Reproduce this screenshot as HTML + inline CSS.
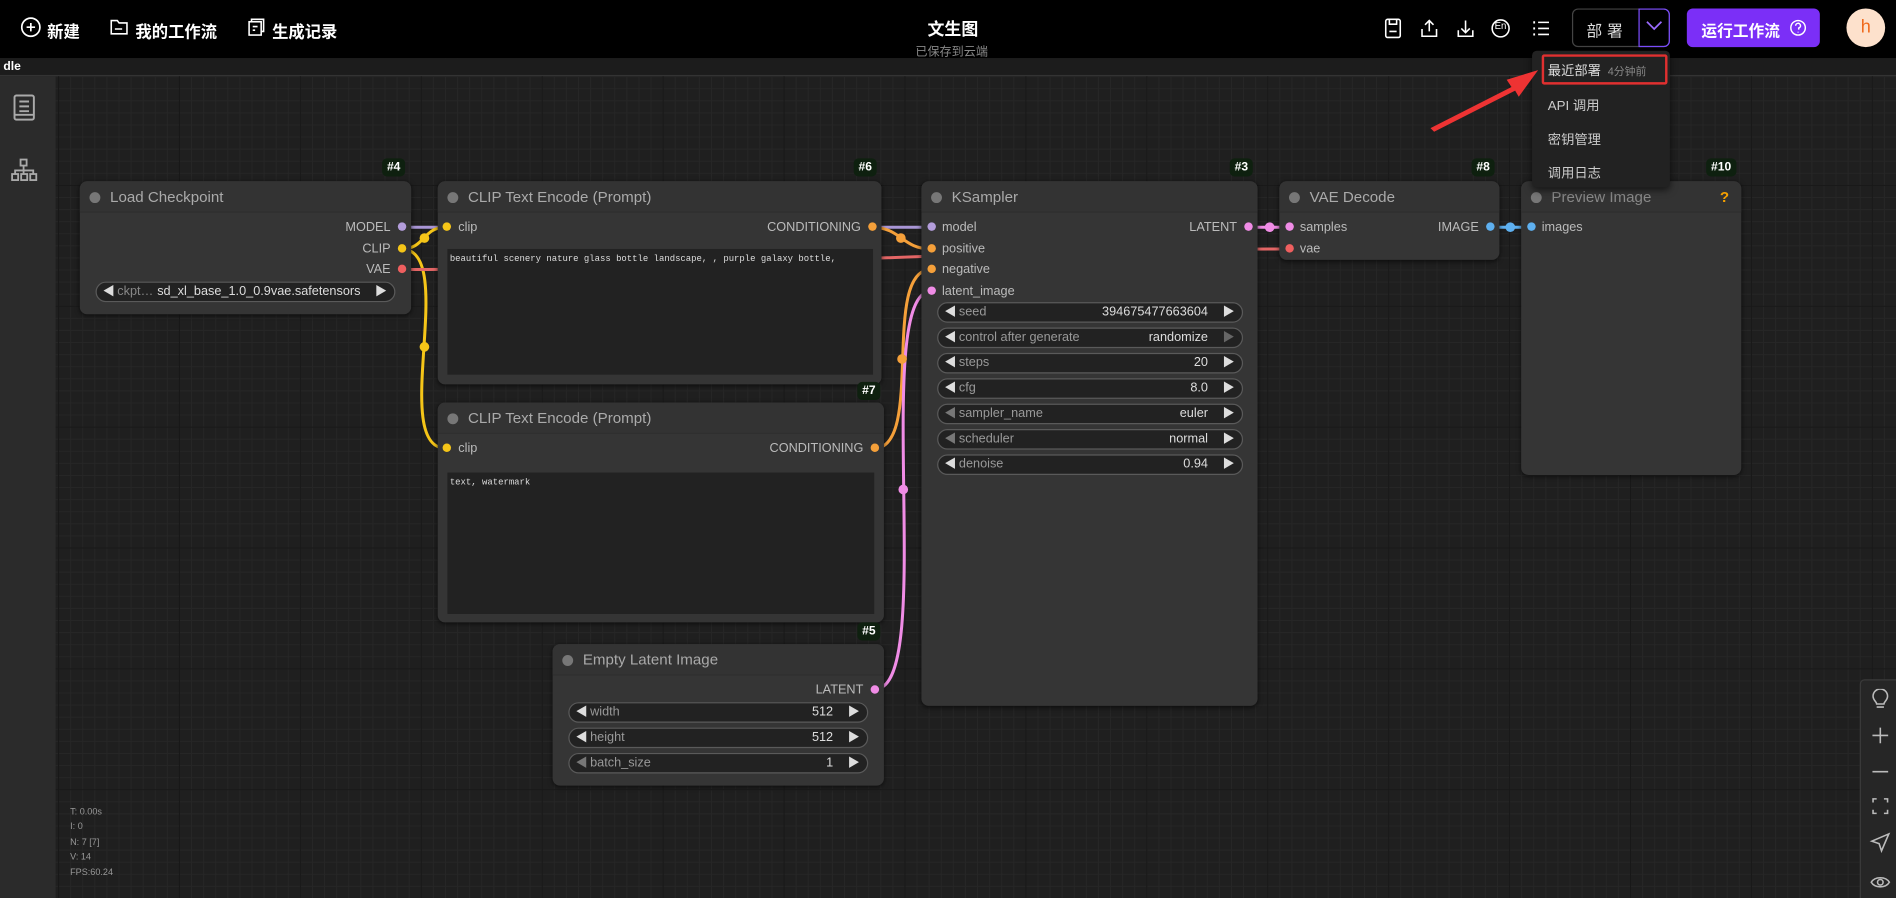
<!DOCTYPE html>
<html><head><meta charset="utf-8"><style>
*{box-sizing:border-box;margin:0;padding:0}
html,body{width:1896px;height:898px;overflow:hidden;background:#000}
#w{position:absolute;left:0;top:0;width:1568px;height:743px;transform:scale(1.2092,1.2086);transform-origin:0 0;font-family:"Liberation Sans","Noto Sans CJK SC",sans-serif;overflow:hidden}
.top{position:absolute;left:0;top:0;width:1568px;height:48px;background:#000;color:#fff}
.canvas{position:absolute;left:0;top:48px;width:1568px;height:695px;background-color:#1f1f1f;
background-image:linear-gradient(#181818 1px,transparent 1px),linear-gradient(90deg,#181818 1px,transparent 1px),linear-gradient(#262626 1px,transparent 1px),linear-gradient(90deg,#262626 1px,transparent 1px);
background-size:100px 100px,100px 100px,10px 10px,10px 10px;background-position:48px 5px,48px 5px,48px 5px,48px 5px}
.strip{position:absolute;left:0;top:48px;width:1568px;height:15px;background:#1c1c1c;border-bottom:1px solid #333;color:#fff;font-size:10px;font-weight:bold;line-height:15px}
.side{position:absolute;left:0;top:63px;width:46px;height:680px;background:#2b2b2b}
.node{position:absolute;background:#353535;border-radius:6px;box-shadow:0 1px 4px rgba(0,0,0,.6)}
.tt{height:26px;border-bottom:1px solid #2e2e2e;color:#aaa;font-size:12.5px;line-height:26px;padding-left:25px;position:relative;background:#333;border-radius:6px 6px 0 0}
.tt:before{content:"";position:absolute;left:8px;top:9px;width:9px;height:9px;border-radius:50%;background:#777}
.badge{position:absolute;background:#0e200f;color:#fff;font-size:10px;font-weight:bold;padding:2px 4px;border-radius:4px}
.sl{position:absolute;font-size:10.5px;color:#bbb;line-height:12px}
.dot{position:absolute;width:7px;height:7px;border-radius:50%}
.wd{position:absolute;height:17px;border:1px solid #5a5a5a;border-radius:9px;background:#222;font-size:10.5px;color:#999;line-height:15px}
.wd .l{position:absolute;left:5px;color:#ddd;font-size:10px}
.wd .n{position:absolute;left:17px}
.wd .v{position:absolute;right:28px;color:#ddd}
.wd .r{position:absolute;right:6px;color:#ddd;font-size:10px}
.ta{position:absolute;background:#222;color:#ddd;font-family:"Liberation Mono",monospace;font-size:7.4px;padding:5px 2px}
.menu{position:absolute;left:1267px;top:42px;width:114px;height:113px;background:#222;border-radius:4px;box-shadow:0 2px 6px rgba(0,0,0,.6);color:#ccc;font-size:11px}
.menu div{position:absolute;left:13px}
</style></head><body><div id="w">
<div class="canvas"></div>
<div class="strip">&nbsp;dle</div>
<div class="side">
<svg style="position:absolute;left:11px;top:15px" width="18" height="22" viewBox="0 0 18 22" fill="none" stroke="#aaa" stroke-width="1.6"><rect x="1" y="1" width="16" height="20" rx="1.5"/><path d="M5 6h8M5 10h8M5 14h8M1 17h16"/></svg>
<svg style="position:absolute;left:9px;top:68px" width="22" height="20" viewBox="0 0 22 20" fill="none" stroke="#aaa" stroke-width="1.5"><rect x="8" y="1" width="5" height="5"/><rect x="1" y="13" width="5" height="5"/><rect x="8.5" y="13" width="5" height="5"/><rect x="16" y="13" width="5" height="5"/><path d="M10.5 6v7M3.5 13v-3h15v3"/></svg>
</div>
<div class="top">
<svg style="position:absolute;left:17px;top:14px" width="17" height="17" viewBox="0 0 17 17" fill="none" stroke="#fff" stroke-width="1.4"><circle cx="8.5" cy="8.5" r="7.5"/><path d="M8.5 5v7M5 8.5h7"/></svg>
<span style="position:absolute;left:39px;top:15px;font-size:13.5px;font-weight:bold">新建</span>
<svg style="position:absolute;left:91px;top:16px" width="15" height="13" viewBox="0 0 15 13" fill="none" stroke="#fff" stroke-width="1.3"><path d="M1 1h5l1.5 2H14v9H1z"/><path d="M4 8h6"/></svg>
<span style="position:absolute;left:112px;top:15px;font-size:13.5px;font-weight:bold">我的工作流</span>
<svg style="position:absolute;left:205px;top:15px" width="14" height="15" viewBox="0 0 14 15" fill="none" stroke="#fff" stroke-width="1.3"><rect x="1" y="3" width="10" height="11"/><path d="M3 3V1h10v10h-2M4 7h4M4 10h2"/></svg>
<span style="position:absolute;left:225px;top:15px;font-size:13.5px;font-weight:bold">生成记录</span>
<span style="position:absolute;left:767px;top:14px;font-size:14px;font-weight:bold">文生图</span>
<span style="position:absolute;left:757px;top:34px;font-size:10px;color:#888">已保存到云端</span>
<svg style="position:absolute;left:1145px;top:15px" width="140" height="17" viewBox="0 0 140 17" fill="none" stroke="#fff" stroke-width="1.3">
<rect x="1" y="1" width="12" height="15" rx="1.5"/><path d="M4 1v4h6V1M4 11h6"/>
<path d="M37 2v9M33.5 5.5L37 2l3.5 3.5M31 9v6h12V9"/>
<path d="M67 2v10M63.5 8.5L67 12l3.5-3.5M61 10v5h12v-5"/>
<circle cx="96" cy="8.5" r="7"/>
<path d="M127 3.5h9M127 8.5h9M127 13.5h9"/>
<path d="M123 3.5h1.5M123 8.5h1.5M123 13.5h1.5" stroke-width="1.8"/>
</svg>
<span style="position:absolute;left:1236px;top:17px;font-size:8px;color:#fff">En</span>
<div style="position:absolute;left:1300px;top:7px;width:81px;height:32px;border:1px solid #444;border-radius:5px"></div>
<span style="position:absolute;left:1312px;top:15px;font-size:13px;color:#ddd;letter-spacing:4px">部署</span>
<div style="position:absolute;left:1355px;top:7px;width:26px;height:32px;border:1px solid #7c4dff;border-radius:0 5px 5px 0"></div>
<svg style="position:absolute;left:1361px;top:17px" width="14" height="9" viewBox="0 0 14 9" fill="none" stroke="#9b6bff" stroke-width="1.4"><path d="M1 1l6 6 6-6"/></svg>
<div style="position:absolute;left:1395px;top:7px;width:110px;height:32px;background:#7b2ff7;border-radius:5px"></div>
<span style="position:absolute;left:1407px;top:15px;font-size:13px;font-weight:bold;color:#fff">运行工作流</span>
<svg style="position:absolute;left:1480px;top:16px" width="14" height="14" viewBox="0 0 14 14" fill="none" stroke="#fff" stroke-width="1.2"><circle cx="7" cy="7" r="6"/><path d="M5 5.3a2 2 0 1 1 2.5 1.9V8.5M7 10.3v.6"/></svg>
<div style="position:absolute;left:1527px;top:7px;width:32px;height:32px;border-radius:50%;background:#fde1cc;color:#f06a1c;font-size:15px;text-align:center;line-height:31px">h</div>
</div>

<svg style="position:absolute;left:0;top:0" width="1568" height="743" fill="none" stroke-width="2.5">
<path d="M332 188H771" stroke="#a996d6"/>
<path d="M332 206C352 206 349 188 369 188" stroke="#f5c518"/>
<path d="M332 206C380 206 321 371 369 371" stroke="#f5c518"/>
<path d="M332 223C600 223 800 206 1066 206" stroke="#e46666"/>
<path d="M721 188C745 188 746 206 770 206" stroke="#f5a03a"/>
<path d="M723 371C765 371 728 223 770 223" stroke="#f5a03a"/>
<path d="M724 570C775 570 720 241 770 241" stroke="#f08ce6"/>
<path d="M1033 188H1066" stroke="#f08ce6"/>
<path d="M1232 188H1266" stroke="#5eb0f0"/>
<g stroke="none"><circle cx="351" cy="197" r="4" fill="#f5c518"/><circle cx="351" cy="287" r="4" fill="#f5c518"/><circle cx="745" cy="197" r="4" fill="#f5a03a"/><circle cx="746" cy="297" r="4" fill="#f5a03a"/><circle cx="747" cy="405" r="4" fill="#f08ce6"/><circle cx="1050" cy="188" r="4" fill="#f08ce6"/><circle cx="1249" cy="188" r="4" fill="#5eb0f0"/></g>
</svg>

<!-- Load Checkpoint -->
<div class="badge" style="left:316px;top:131px">#4</div>
<div class="node" style="left:66px;top:150px;width:274px;height:110px"><div class="tt">Load Checkpoint</div>
<div class="sl" style="right:17px;top:32px">MODEL</div><div class="dot" style="right:4px;top:34px;background:#b39ddb"></div>
<div class="sl" style="right:17px;top:50px">CLIP</div><div class="dot" style="right:4px;top:52px;background:#f5c518"></div>
<div class="sl" style="right:17px;top:67px">VAE</div><div class="dot" style="right:4px;top:69px;background:#ef5f5f"></div>
<div class="wd" style="left:13px;top:83px;width:248px"><span class="l">◀</span><span class="n" style="color:#888">ckpt…</span><span style="position:absolute;left:50px;color:#ddd">sd_xl_base_1.0_0.9vae.safetensors</span><span class="r">▶</span></div>
</div>

<!-- CLIP 6 -->
<div class="badge" style="left:706px;top:131px">#6</div>
<div class="node" style="left:362px;top:150px;width:367px;height:168px"><div class="tt">CLIP Text Encode (Prompt)</div>
<div class="dot" style="left:4px;top:34px;background:#f5c518"></div><div class="sl" style="left:17px;top:32px">clip</div>
<div class="sl" style="right:17px;top:32px">CONDITIONING</div><div class="dot" style="right:4px;top:34px;background:#f5a03a"></div>
<div class="ta" style="left:8px;top:56px;width:352px;height:104px">beautiful scenery nature glass bottle landscape, , purple galaxy bottle,</div>
</div>

<!-- CLIP 7 -->
<div class="badge" style="left:709px;top:316px">#7</div>
<div class="node" style="left:362px;top:333px;width:369px;height:182px"><div class="tt">CLIP Text Encode (Prompt)</div>
<div class="dot" style="left:4px;top:34px;background:#f5c518"></div><div class="sl" style="left:17px;top:32px">clip</div>
<div class="sl" style="right:17px;top:32px">CONDITIONING</div><div class="dot" style="right:4px;top:34px;background:#f5a03a"></div>
<div class="ta" style="left:8px;top:58px;width:353px;height:117px">text, watermark</div>
</div>

<!-- Empty Latent -->
<div class="badge" style="left:709px;top:515px">#5</div>
<div class="node" style="left:457px;top:533px;width:274px;height:117px"><div class="tt">Empty Latent Image</div>
<div class="sl" style="right:17px;top:32px">LATENT</div><div class="dot" style="right:4px;top:34px;background:#f08ce6"></div>
<div class="wd" style="left:13px;top:48px;width:248px"><span class="l">◀</span><span class="n">width</span><span class="v">512</span><span class="r">▶</span></div>
<div class="wd" style="left:13px;top:69px;width:248px"><span class="l">◀</span><span class="n">height</span><span class="v">512</span><span class="r">▶</span></div>
<div class="wd" style="left:13px;top:90px;width:248px"><span class="l" style="color:#777">◀</span><span class="n">batch_size</span><span class="v">1</span><span class="r">▶</span></div>
</div>

<!-- KSampler -->
<div class="badge" style="left:1017px;top:131px">#3</div>
<div class="node" style="left:762px;top:150px;width:278px;height:434px"><div class="tt">KSampler</div>
<div class="dot" style="left:5px;top:34px;background:#b39ddb"></div><div class="sl" style="left:17px;top:32px">model</div>
<div class="dot" style="left:5px;top:52px;background:#f5a03a"></div><div class="sl" style="left:17px;top:50px">positive</div>
<div class="dot" style="left:5px;top:69px;background:#f5a03a"></div><div class="sl" style="left:17px;top:67px">negative</div>
<div class="dot" style="left:5px;top:87px;background:#f08ce6"></div><div class="sl" style="left:17px;top:85px">latent_image</div>
<div class="sl" style="right:17px;top:32px">LATENT</div><div class="dot" style="right:4px;top:34px;background:#f08ce6"></div>
<div class="wd" style="left:13px;top:100px;width:253px"><span class="l">◀</span><span class="n">seed</span><span class="v">394675477663604</span><span class="r">▶</span></div>
<div class="wd" style="left:13px;top:121px;width:253px"><span class="l">◀</span><span class="n">control after generate</span><span class="v">randomize</span><span class="r" style="color:#666">▶</span></div>
<div class="wd" style="left:13px;top:142px;width:253px"><span class="l">◀</span><span class="n">steps</span><span class="v">20</span><span class="r">▶</span></div>
<div class="wd" style="left:13px;top:163px;width:253px"><span class="l">◀</span><span class="n">cfg</span><span class="v">8.0</span><span class="r">▶</span></div>
<div class="wd" style="left:13px;top:184px;width:253px"><span class="l" style="color:#777">◀</span><span class="n">sampler_name</span><span class="v">euler</span><span class="r">▶</span></div>
<div class="wd" style="left:13px;top:205px;width:253px"><span class="l" style="color:#777">◀</span><span class="n">scheduler</span><span class="v">normal</span><span class="r">▶</span></div>
<div class="wd" style="left:13px;top:226px;width:253px"><span class="l">◀</span><span class="n">denoise</span><span class="v">0.94</span><span class="r">▶</span></div>
</div>

<!-- VAE Decode -->
<div class="badge" style="left:1217px;top:131px">#8</div>
<div class="node" style="left:1058px;top:150px;width:182px;height:65px"><div class="tt">VAE Decode</div>
<div class="dot" style="left:5px;top:34px;background:#f08ce6"></div><div class="sl" style="left:17px;top:32px">samples</div>
<div class="dot" style="left:5px;top:52px;background:#ef5f5f"></div><div class="sl" style="left:17px;top:50px">vae</div>
<div class="sl" style="right:17px;top:32px">IMAGE</div><div class="dot" style="right:4px;top:34px;background:#5eb0f0"></div>
</div>

<!-- Preview -->
<div class="badge" style="left:1411px;top:131px">#10</div>
<div class="node" style="left:1258px;top:150px;width:182px;height:243px"><div class="tt" style="color:#888">Preview Image<span style="position:absolute;right:10px;color:#f5a000;font-weight:bold">?</span></div>
<div class="dot" style="left:5px;top:34px;background:#5eb0f0"></div><div class="sl" style="left:17px;top:32px">images</div>
</div>

<!-- menu -->
<div class="menu">
<div style="top:8px;font-size:11px;color:#ddd">最近部署 <span style="font-size:9px;color:#888">&nbsp;4分钟前</span></div>
<div style="top:37px">API 调用</div>
<div style="top:65px">密钥管理</div>
<div style="top:93px">调用日志</div>
</div>
<div style="position:absolute;left:1275px;top:45px;width:104px;height:25px;border:2px solid #e03030;border-radius:2px"></div>
<svg style="position:absolute;left:0;top:0" width="1568" height="743"><path d="M1183 106L1250 72L1246 66L1272 58L1256 80L1253 75L1186 109Z" fill="#ee3333"/></svg>

<!-- stats -->
<div style="position:absolute;left:58px;top:666px;font-size:7.5px;color:#999;line-height:12.4px">T: 0.00s<br>I: 0<br>N: 7 [7]<br>V: 14<br>FPS:60.24</div>

<!-- right toolbar -->
<div style="position:absolute;left:1538px;top:562px;width:40px;height:190px;background:#262626;border:1px solid #3a3a3a;border-radius:4px"></div>
<svg style="position:absolute;left:1546px;top:570px" width="18" height="172" viewBox="0 0 18 172" fill="none" stroke="#bbb" stroke-width="1.3">
<path d="M6 15h6M6 12.5c0-2-3-3-3-6.5a6 6 0 0 1 12 0c0 3.5-3 4.5-3 6.5z"/>
<path d="M9 32v13M2.5 38.5h13"/>
<path d="M2.5 68.5h13"/>
<path d="M3 94v-3h3M12 91h3v3M15 100v3h-3M6 103H3v-3"/>
<path d="M16 120L2 126l6 2 2 6z"/>
<path d="M1.5 160c3-5 12-5 15 0c-3 5-12 5-15 0z"/><circle cx="9" cy="160" r="2.3"/>
</svg>
</div></body></html>
